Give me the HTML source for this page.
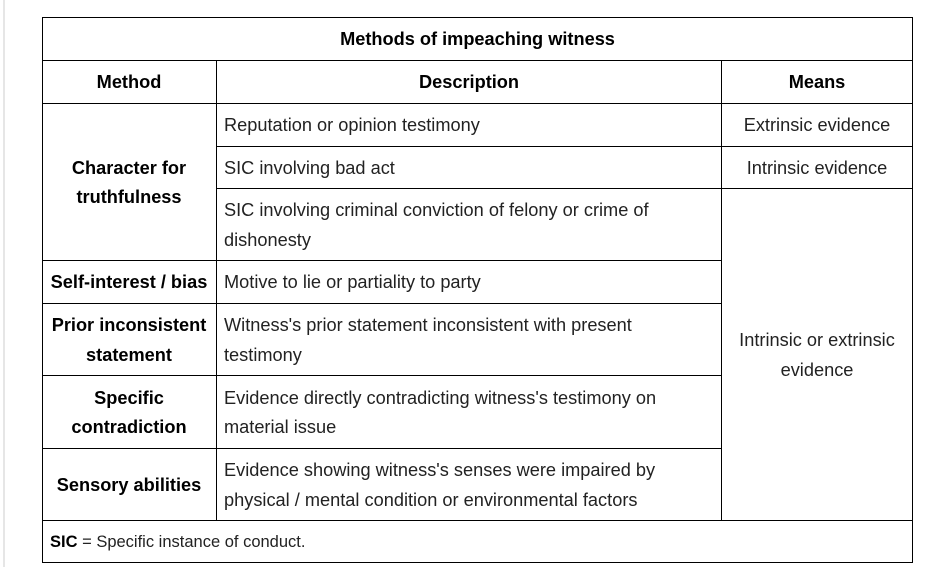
<!DOCTYPE html>
<html><head><meta charset="utf-8"><style>
body{margin:0;width:930px;height:567px;background:#fff;position:relative;overflow:hidden;font-family:"Liberation Sans",Arial,sans-serif;color:#222;font-size:18.2px}
.h,.v{position:absolute;background:#000}
.h{height:1px}.v{width:1px}
.c{position:absolute;display:flex;align-items:center;line-height:29.5px;box-sizing:border-box;padding-top:2px;white-space:nowrap}
.ctr{justify-content:center;text-align:center}
.l{padding-left:7px}
b{color:#000}
</style></head><body>
<div style="position:absolute;left:3px;top:0;width:2px;height:567px;background:#e6e6e6"></div>
<div class="h" style="left:42px;width:871px;top:17px"></div>
<div class="h" style="left:42px;width:871px;top:60px"></div>
<div class="h" style="left:42px;width:871px;top:103px"></div>
<div class="h" style="left:216px;width:697px;top:146px"></div>
<div class="h" style="left:216px;width:697px;top:188px"></div>
<div class="h" style="left:42px;width:680px;top:260px"></div>
<div class="h" style="left:42px;width:680px;top:303px"></div>
<div class="h" style="left:42px;width:680px;top:375px"></div>
<div class="h" style="left:42px;width:680px;top:448px"></div>
<div class="h" style="left:42px;width:871px;top:520px"></div>
<div class="h" style="left:42px;width:871px;top:562px"></div>
<div class="v" style="left:42px;top:17px;height:546px"></div>
<div class="v" style="left:912px;top:17px;height:546px"></div>
<div class="v" style="left:216px;top:60px;height:461px"></div>
<div class="v" style="left:721px;top:60px;height:461px"></div>

<div class="c ctr" style="left:42px;top:18px;width:871px;height:42px"><b>Methods of impeaching witness</b></div>
<div class="c ctr" style="left:42px;top:61px;width:174px;height:42px"><b>Method</b></div>
<div class="c ctr" style="left:217px;top:61px;width:504px;height:42px"><b>Description</b></div>
<div class="c ctr" style="left:722px;top:61px;width:190px;height:42px"><b>Means</b></div>

<div class="c ctr" style="left:42px;top:104px;width:174px;height:156px"><b>Character for<br>truthfulness</b></div>
<div class="c l" style="left:217px;top:104px;width:504px;height:42px">Reputation or opinion testimony</div>
<div class="c ctr" style="left:722px;top:104px;width:190px;height:42px">Extrinsic evidence</div>
<div class="c l" style="left:217px;top:147px;width:504px;height:41px">SIC involving bad act</div>
<div class="c ctr" style="left:722px;top:147px;width:190px;height:41px">Intrinsic evidence</div>
<div class="c l" style="left:217px;top:189px;width:504px;height:71px">SIC involving criminal conviction of felony or crime of<br>dishonesty</div>

<div class="c ctr" style="left:42px;top:261px;width:174px;height:42px"><b>Self-interest / bias</b></div>
<div class="c l" style="left:217px;top:261px;width:504px;height:42px">Motive to lie or partiality to party</div>

<div class="c ctr" style="left:42px;top:304px;width:174px;height:71px"><b>Prior inconsistent<br>statement</b></div>
<div class="c l" style="left:217px;top:304px;width:504px;height:71px">Witness's prior statement inconsistent with present<br>testimony</div>

<div class="c ctr" style="left:42px;top:376px;width:174px;height:72px"><b>Specific<br>contradiction</b></div>
<div class="c l" style="left:217px;top:376px;width:504px;height:72px">Evidence directly contradicting witness's testimony on<br>material issue</div>

<div class="c ctr" style="left:42px;top:449px;width:174px;height:71px"><b>Sensory abilities</b></div>
<div class="c l" style="left:217px;top:449px;width:504px;height:71px">Evidence showing witness's senses were impaired by<br>physical / mental condition or environmental factors</div>

<div class="c ctr" style="left:722px;top:189px;width:190px;height:331px">Intrinsic or extrinsic<br>evidence</div>

<div class="c" style="left:50px;top:521px;width:860px;height:41px;font-size:16.5px"><b>SIC</b>&nbsp;= Specific instance of conduct.</div>
</body></html>
